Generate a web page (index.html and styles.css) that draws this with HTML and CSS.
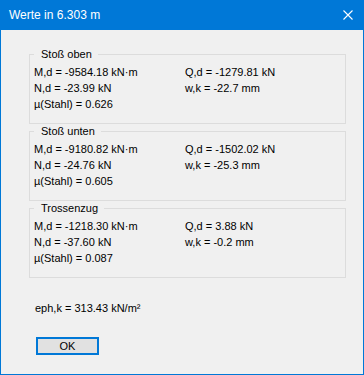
FILE: index.html
```html
<!DOCTYPE html>
<html lang="de">
<head>
  <meta charset="UTF-8">
  <title>Werte in 6.303 m</title>
  <link rel="stylesheet" href="styles.css">
</head>
<body>
  <div class="dialog">
    <div class="titlebar">
      <span class="caption">Werte in 6.303 m</span>
      <span class="close">
        <svg width="10" height="10" viewBox="0 0 10 10"><path d="M0.5 0.5L9.5 9.5M9.5 0.5L0.5 9.5" stroke="#fff" stroke-width="1.1" fill="none"/></svg>
      </span>
    </div>
    <div class="content">
      <fieldset class="group">
        <legend>Stoß oben</legend>
        <div class="values">
          <span>M,d = -9584.18 kN·m</span><span>Q,d = -1279.81 kN</span>
          <span>N,d = -23.99 kN</span><span>w,k = -22.7 mm</span>
          <span>µ(Stahl) = 0.626</span>
        </div>
      </fieldset>
      <fieldset class="group">
        <legend>Stoß unten</legend>
        <div class="values">
          <span>M,d = -9180.82 kN·m</span><span>Q,d = -1502.02 kN</span>
          <span>N,d = -24.76 kN</span><span>w,k = -25.3 mm</span>
          <span>µ(Stahl) = 0.605</span>
        </div>
      </fieldset>
      <fieldset class="group">
        <legend>Trossenzug</legend>
        <div class="values">
          <span>M,d = -1218.30 kN·m</span><span>Q,d = 3.88 kN</span>
          <span>N,d = -37.60 kN</span><span>w,k = -0.2 mm</span>
          <span>µ(Stahl) = 0.087</span>
        </div>
      </fieldset>
      <div class="eph">eph,k = 313.43 kN/m²</div>
      <button class="okbtn">OK</button>
    </div>
  </div>
</body>
</html>
```

FILE: styles.css
```css
html,body{margin:0; padding:0;}
body{font-family:"Liberation Sans", Arial, sans-serif; font-size:11px; color:#000; background:#f0f0f0;}
.dialog{width:362px; height:374px; border:1px solid #0078d7; border-top:0; background:#f0f0f0;}
.titlebar{height:30px; background:#0078d7; color:#fff; display:flex; align-items:center; justify-content:space-between; margin:0 -1px; padding:0 11px 0 9px;}
.caption{font-size:12px;}
.close{display:flex; width:10px; height:10px;}
.content{padding:17px 17px 0 28px;}
.group{margin:0; padding:3px 4px 11px 4px; border:1px solid #dcdcdc; min-width:0;}
.group legend{padding:0 6px 0 7px; margin-left:0; line-height:14px;}
.values{display:grid; grid-template-columns:151px 1fr; line-height:16px;}
.eph{margin:22px 0 0 6px; line-height:16px;}
.okbtn{display:block; margin:21px 0 0 7px; width:63px; height:18px; padding:0; border:2px solid #0078d7; background:#e1e1e1; font-family:"Liberation Sans", Arial, sans-serif; font-size:11px; color:#000; line-height:14px;}
```
